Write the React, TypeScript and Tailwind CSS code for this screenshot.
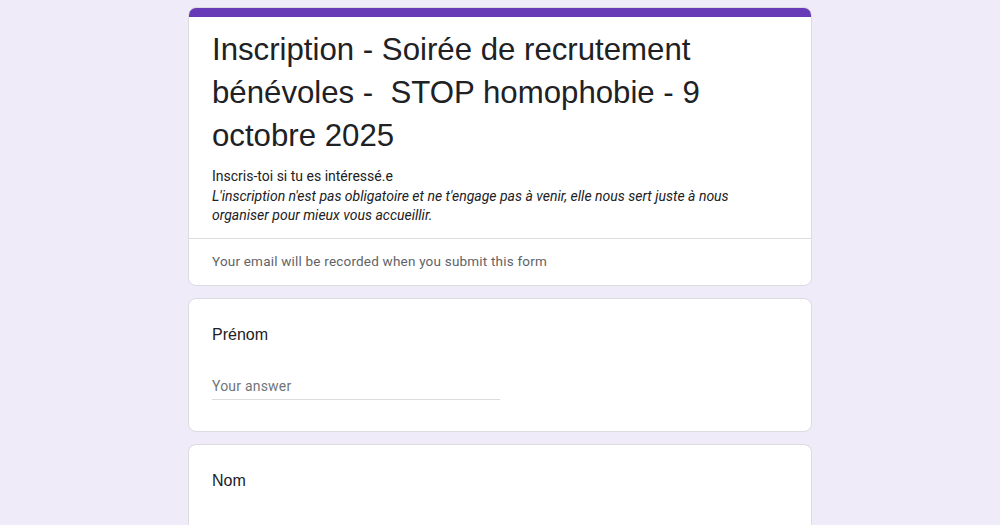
export default function App() {
    return (
        <div className="min-h-screen w-full bg-[#f0ebf8] pt-[7px] font-['Roboto',sans-serif] text-[#202124]">
            <div className="mx-auto w-[624px] flex flex-col gap-3">
                {/* header card */}
                <div className="rounded-lg border border-[#dadce0] bg-white overflow-hidden">
                    <div className="h-[10px] bg-[#673ab7] -mx-px -mt-px" />
                    <div className="pl-[23px] pr-6 pt-[11px] pb-3">
                        <h1 className="font-['Liberation_Sans',Arial,sans-serif] text-[31.2px] leading-[43px] text-[#202124] pr-20">
                            Inscription - Soirée de recrutement bénévoles -&nbsp; STOP homophobie - 9 octobre 2025
                        </h1>
                        <div className="mt-[10px] text-[14px] leading-[19.5px]">
                            <p>Inscris-toi si tu es intéressé.e</p>
                            <p className="italic pr-12">
                                L'inscription n'est pas obligatoire et ne t'engage pas à venir, elle nous sert juste à nous organiser pour mieux vous accueillir.
                            </p>
                        </div>
                    </div>
                    <div className="border-t border-[#dadce0] pl-[23px] pr-6 pt-3 pb-[14px] text-[13.5px] leading-5 tracking-[0.2px] text-[#5f6368]">
                        Your email will be recorded when you submit this form
                    </div>
                </div>

                {/* question cards */}
                <Question label="Prénom" />
                <Question label="Nom" />
            </div>
        </div>
    );
}

function Question({ label }: { label: string }) {
    return (
        <div className="rounded-lg border border-[#dadce0] bg-white pl-[23px] pr-6 pt-6 pb-[31px]">
            <div className="font-['Liberation_Sans',Arial,sans-serif] text-[16px] leading-6 text-[#202124]">
                {label}
            </div>
            <div className="mt-[29px] w-[288px] border-b border-[#dadce0] pb-[3px] text-[14px] leading-5 tracking-[0.2px] text-[#70757a]">
                Your answer
            </div>
        </div>
    );
}
